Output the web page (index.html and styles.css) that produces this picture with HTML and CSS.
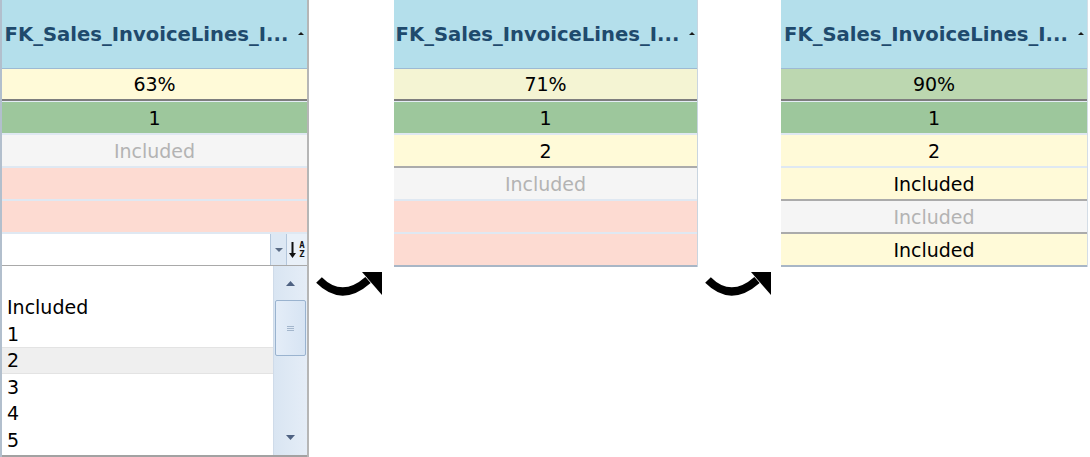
FILE: index.html
```html
<!DOCTYPE html>
<html>
<head>
<meta charset="utf-8">
<link rel="stylesheet" href="styles.css">
</head>
<body>
<div class="page">
  <div class="col col1">
    <div class="hdr"><span class="title">FK_Sales_InvoiceLines_I...</span><span class="sort-ind"></span></div>
    <div class="cell pct c-cream">63%</div>
    <div class="cell c-green">1</div>
    <div class="cell c-grey muted">Included</div>
    <div class="cell c-pink"></div>
    <div class="cell c-pink"></div>
    <div class="filter">
      <div class="input"></div>
      <div class="dd-btn"><svg width="8" height="4" viewBox="0 0 8 4"><path d="M0 0H8L4 4Z" fill="#5a6b84"/></svg></div>
      <div class="sort-btn">
        <svg width="7" height="16" viewBox="0 0 7 16"><path d="M2.5 0H4.5V11H7L3.5 16L0 11H2.5Z" fill="#111"/></svg>
        <span class="az"><span>A</span><span>Z</span></span>
      </div>
    </div>
    <div class="list">
      <div class="items">
        <div class="item"></div>
        <div class="item">Included</div>
        <div class="item">1</div>
        <div class="item sel">2</div>
        <div class="item">3</div>
        <div class="item">4</div>
        <div class="item">5</div>
      </div>
      <div class="scroll">
        <div class="sb-up"><svg width="9" height="5" viewBox="0 0 9 5"><path d="M0 5H9L4.5 0Z" fill="#4f6282"/></svg></div>
        <div class="thumb"><span class="grip"></span></div>
        <div class="sb-fill"></div>
        <div class="sb-down"><svg width="9" height="5" viewBox="0 0 9 5"><path d="M0 0H9L4.5 5Z" fill="#4f6282"/></svg></div>
      </div>
    </div>
  </div>

  <div class="gap gap1">
    <svg class="arrow" width="68" height="27" viewBox="0 0 68 27"><path d="M3 9 Q26 32 52 9" fill="none" stroke="#000" stroke-width="8"/><path d="M46 1H66V24Z" fill="#000"/></svg>
  </div>

  <div class="col col2">
    <div class="hdr"><span class="title">FK_Sales_InvoiceLines_I...</span><span class="sort-ind"></span></div>
    <div class="cell pct c-cream2">71%</div>
    <div class="cell c-green">1</div>
    <div class="cell c-cream dark">2</div>
    <div class="cell c-grey muted">Included</div>
    <div class="cell c-pink"></div>
    <div class="cell c-pink last"></div>
  </div>

  <div class="gap gap2">
    <svg class="arrow" width="68" height="27" viewBox="0 0 68 27"><path d="M3 9 Q26 32 52 9" fill="none" stroke="#000" stroke-width="8"/><path d="M46 1H66V24Z" fill="#000"/></svg>
  </div>

  <div class="col col3">
    <div class="hdr"><span class="title">FK_Sales_InvoiceLines_I...</span><span class="sort-ind"></span></div>
    <div class="cell pct c-lgreen">90%</div>
    <div class="cell c-green">1</div>
    <div class="cell c-cream">2</div>
    <div class="cell c-cream dark">Included</div>
    <div class="cell c-grey muted dark">Included</div>
    <div class="cell c-cream last">Included</div>
  </div>
</div>
</body>
</html>
```

FILE: styles.css
```css
html, body {
  margin: 0;
  padding: 0;
  background: #ffffff;
}
body {
  width: 1090px;
  height: 457px;
  overflow: hidden;
  font-family: "DejaVu Sans", Verdana, sans-serif;
  font-size: 19px;
  color: #000;
}
.page {
  display: flex;
  align-items: flex-start;
  height: 457px;
}
.col {
  display: flex;
  flex-direction: column;
}
.col1 {
  width: 305px;
  height: 457px;
  border-left: 2px solid #b2bfcd;
  border-right: 2px solid #b6b6b6;
}
.col2 {
  width: 303px;
  border-right: 1px solid #c9d5e0;
}
.col3 {
  width: 306px;
  border-right: 1px solid #d4dde6;
}
.gap1 {
  width: 85px;
}
.gap2 {
  width: 83px;
}
.arrow {
  display: block;
  margin-top: 271px;
  margin-left: 7px;
}
.hdr {
  height: 68px;
  border-bottom: 1px solid #9dbad3;
  background: #b4dfeb;
  display: flex;
  align-items: center;
  justify-content: center;
  color: #1f4a6d;
  font-weight: bold;
  font-size: 19.6px;
  white-space: nowrap;
}
.title {
  margin-top: 1px;
}
.sort-ind {
  width: 0;
  height: 0;
  border-left: 3px solid transparent;
  border-right: 3px solid transparent;
  border-bottom: 3px solid #1a1a1a;
  margin-left: 10px;
  margin-top: -2px;
}
.cell {
  height: 31px;
  border-bottom: 2px solid #dfe8f2;
  display: flex;
  align-items: center;
  justify-content: center;
  white-space: nowrap;
}
.cell.pct {
  height: 30px;
  border-bottom: 2px solid #7e7e7e;
  margin-bottom: 1px;
  box-shadow: 0 1px 0 #e4ecf5;
}
.cell.dark {
  border-bottom-color: #ababab;
}
.cell.last {
  border-bottom-color: #a8b6c6;
}
.c-cream { background: #fffad8; }
.c-cream2 { background: #f4f4d3; }
.c-lgreen { background: #bcd7b0; }
.c-green { background: #9dc79c; }
.c-grey { background: #f5f5f5; }
.c-pink { background: #fddbd2; }
.muted { color: #b3b3b3; }

.filter {
  height: 31px;
  border-bottom: 1px solid #a9a9a9;
  display: flex;
  background: #fff;
}
.input {
  flex: 1;
}
.dd-btn {
  width: 15px;
  background: #dde8f4;
  border-left: 1px solid #b4c7dc;
  border-right: 1px solid #b4c7dc;
  display: flex;
  align-items: center;
  justify-content: center;
}
.sort-btn {
  width: 20px;
  background: #e9f0f8;
  display: flex;
  align-items: center;
  justify-content: center;
  gap: 3px;
}
.az {
  display: flex;
  flex-direction: column;
  font-family: "DejaVu Sans Mono", monospace;
  font-size: 9px;
  line-height: 8.5px;
  font-weight: bold;
  color: #111;
}
.list {
  flex: 1;
  display: flex;
  border-bottom: 2px solid #a2a2a2;
  min-height: 0;
}
.items {
  flex: 1;
  padding-top: 1.5px;
}
.item {
  height: 26.5px;
  line-height: 26.5px;
  padding-left: 5px;
  box-sizing: border-box;
}
.item.sel {
  background: #efefef;
  border-top: 1px solid #e3e3e3;
  border-bottom: 1px solid #e3e3e3;
  line-height: 24.5px;
}
.scroll {
  width: 33px;
  background: linear-gradient(to right, #d9e5f2, #e5edf7);
  border-left: 1px solid #cfdbe9;
  display: flex;
  flex-direction: column;
  align-items: center;
}
.sb-up {
  height: 34px;
  display: flex;
  align-items: center;
  justify-content: center;
}
.thumb {
  width: 29px;
  height: 54px;
  border: 1px solid #9ab3cf;
  border-radius: 2px;
  background: linear-gradient(to right, #e4edf8, #d7e4f3);
  display: flex;
  align-items: center;
  justify-content: center;
}
.grip {
  width: 7px;
  height: 5px;
  border-top: 1px solid #a3b6cc;
  border-bottom: 1px solid #a3b6cc;
  box-sizing: border-box;
  background: linear-gradient(#a3b6cc, #a3b6cc) center/100% 1px no-repeat;
}
.sb-fill {
  flex: 1;
}
.sb-down {
  height: 36px;
  display: flex;
  align-items: center;
  justify-content: center;
}
```
